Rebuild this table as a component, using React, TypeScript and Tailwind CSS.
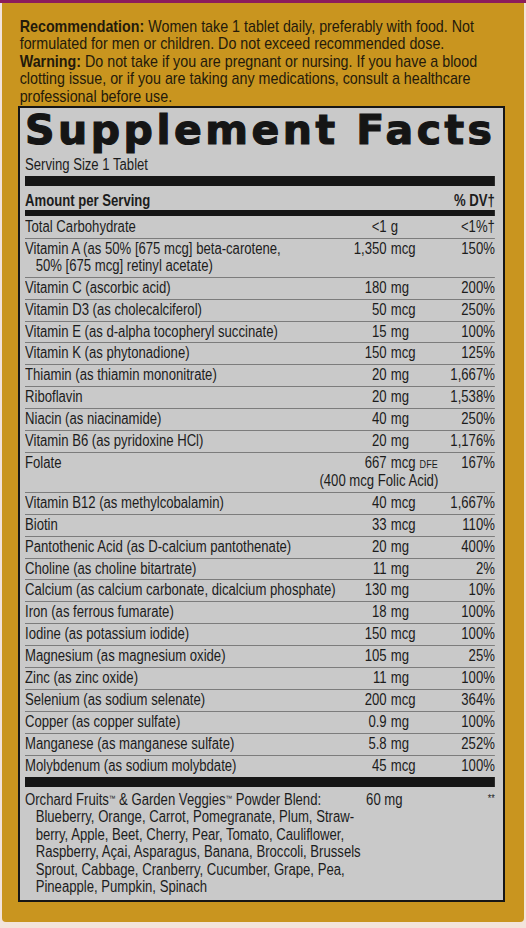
import React from "react";

type Row = {
  name: string[];
  num: string;
  unit: string;
  dv: string;
};

const rows: Row[] = [
  { name: ["Total Carbohydrate"], num: "<1", unit: "g", dv: "<1%†" },
  {
    name: ["Vitamin A (as 50% [675 mcg] beta-carotene,", "50% [675 mcg] retinyl acetate)"],
    num: "1,350",
    unit: "mcg",
    dv: "150%",
  },
  { name: ["Vitamin C (ascorbic acid)"], num: "180", unit: "mg", dv: "200%" },
  { name: ["Vitamin D3 (as cholecalciferol)"], num: "50", unit: "mcg", dv: "250%" },
  { name: ["Vitamin E (as d-alpha tocopheryl succinate)"], num: "15", unit: "mg", dv: "100%" },
  { name: ["Vitamin K (as phytonadione)"], num: "150", unit: "mcg", dv: "125%" },
  { name: ["Thiamin (as thiamin mononitrate)"], num: "20", unit: "mg", dv: "1,667%" },
  { name: ["Riboflavin"], num: "20", unit: "mg", dv: "1,538%" },
  { name: ["Niacin (as niacinamide)"], num: "40", unit: "mg", dv: "250%" },
  { name: ["Vitamin B6 (as pyridoxine HCl)"], num: "20", unit: "mg", dv: "1,176%" },
  { name: ["Folate"], num: "667", unit: "mcg", dv: "167%" },
  { name: ["Vitamin B12 (as methylcobalamin)"], num: "40", unit: "mcg", dv: "1,667%" },
  { name: ["Biotin"], num: "33", unit: "mcg", dv: "110%" },
  { name: ["Pantothenic Acid (as D-calcium pantothenate)"], num: "20", unit: "mg", dv: "400%" },
  { name: ["Choline (as choline bitartrate)"], num: "11", unit: "mg", dv: "2%" },
  { name: ["Calcium (as calcium carbonate, dicalcium phosphate)"], num: "130", unit: "mg", dv: "10%" },
  { name: ["Iron (as ferrous fumarate)"], num: "18", unit: "mg", dv: "100%" },
  { name: ["Iodine (as potassium iodide)"], num: "150", unit: "mcg", dv: "100%" },
  { name: ["Magnesium (as magnesium oxide)"], num: "105", unit: "mg", dv: "25%" },
  { name: ["Zinc (as zinc oxide)"], num: "11", unit: "mg", dv: "100%" },
  { name: ["Selenium (as sodium selenate)"], num: "200", unit: "mcg", dv: "364%" },
  { name: ["Copper (as copper sulfate)"], num: "0.9", unit: "mg", dv: "100%" },
  { name: ["Manganese (as manganese sulfate)"], num: "5.8", unit: "mg", dv: "252%" },
  { name: ["Molybdenum (as sodium molybdate)"], num: "45", unit: "mcg", dv: "100%" },
];

const blend = [
  "Blueberry, Orange, Carrot, Pomegranate, Plum, Straw-",
  "berry, Apple, Beet, Cherry, Pear, Tomato, Cauliflower,",
  "Raspberry, Açai, Asparagus, Banana, Broccoli, Brussels",
  "Sprout, Cabbage, Cranberry, Cucumber, Grape, Pea,",
  "Pineapple, Pumpkin, Spinach",
];

// label type is a condensed grotesque; no narrow face is installed, so the
// text blocks are laid out wide and squeezed horizontally
const FactRow = ({ row, first }: { row: Row; first: boolean }) => {
  const folate = row.name[0] === "Folate";
  return (
    <div
      className={
        first
          ? "flex items-start pt-[3px] pb-[2px] leading-[16.9px]"
          : "flex items-start py-[2px] leading-[16.9px] border-t border-[#7c7c7c]"
      }
    >
      <div className="flex-1 min-w-0">
        {row.name.map((line, i) => (
          <div key={i} className={i > 0 ? "pl-[13px] whitespace-nowrap" : "whitespace-nowrap"}>
            {line}
          </div>
        ))}
      </div>
      <div className="w-[110px] shrink-0">
        <div className="flex whitespace-nowrap">
          <span className="w-[43px] text-right">{row.num}</span>
          <span className="ml-[5px]">
            {row.unit}
            {folate && <span className="ml-[5px] text-[11px]">DFE</span>}
          </span>
        </div>
        {folate && (
          <div className="flex justify-end whitespace-nowrap pr-[4px]">(400 mcg Folic Acid)</div>
        )}
      </div>
      <div className="w-[65px] shrink-0 text-right whitespace-nowrap">{row.dv}</div>
    </div>
  );
};

export default function App() {
  return (
    <div className="min-h-screen bg-[#f3e4dc] font-['Liberation_Sans',Arial,sans-serif]">
      <div className="h-[3px] bg-[#8c1d5c]" />

      <div className="mx-[2px] h-[919px] overflow-hidden rounded-b-[4px] bg-[#c9951f] pt-[15px] pl-[16px] pr-[19px]">
        {/* Label text above the panel */}
        <div className="w-[560px] origin-left scale-x-[0.84] text-[17px] leading-[17.4px] text-[#241a0b] pl-[2px]">
          <div className="whitespace-nowrap">
            <span className="font-bold">Recommendation:</span> Women take 1 tablet daily, preferably with food. Not
          </div>
          <div className="whitespace-nowrap">formulated for men or children. Do not exceed recommended dose.</div>
          <div className="whitespace-nowrap">
            <span className="font-bold">Warning:</span> Do not take if you are pregnant or nursing. If you have a blood
          </div>
          <div className="whitespace-nowrap">
            clotting issue, or if you are taking any medications, consult a healthcare
          </div>
          <div className="whitespace-nowrap">professional before use.</div>
        </div>

        {/* Supplement Facts panel */}
        <div className="mt-[1px] h-[796px] overflow-hidden border-2 border-[#161616] bg-[#c9c9c9] pt-[2px] pl-[5px] pr-[10px] text-[#1c1c1c]">
          <div className="font-['DejaVu_Sans',sans-serif] font-bold text-[41px] leading-[41px] tracking-[3.5px] whitespace-nowrap text-[#151515] [-webkit-text-stroke:1.2px_#151515]">
            Supplement Facts
          </div>

          <div className="w-[573px] origin-left scale-x-[0.82] text-[16px]">
            <div className="mt-[5px] leading-[17px]">Serving Size 1 Tablet</div>
            <div className="mt-[3px] h-[10px] bg-[#161616]" />
            <div className="flex justify-between pt-[6px] pb-[1px] leading-[17px] font-bold">
              <span>Amount per Serving</span>
              <span>% DV†</span>
            </div>
            <div className="h-[6px] bg-[#161616]" />

            {rows.map((r, i) => (
              <FactRow key={r.name[0]} row={r} first={i === 0} />
            ))}

            <div className="h-[10px] bg-[#161616]" />

            <div className="flex items-start pt-[4px] leading-[17.5px]">
              <div className="flex-1 min-w-0">
                <div className="whitespace-nowrap">
                  Orchard Fruits<sup className="text-[8px]">™</sup> &amp; Garden Veggies
                  <sup className="text-[8px]">™</sup> Powder Blend:
                </div>
                {blend.map((line) => (
                  <div key={line} className="pl-[13px] whitespace-nowrap">
                    {line}
                  </div>
                ))}
              </div>
              <div className="w-[110px] shrink-0 pl-[18px] whitespace-nowrap">60 mg</div>
              <div className="w-[65px] shrink-0 text-right text-[11px] leading-[14px]">**</div>
            </div>
          </div>
        </div>
      </div>
    </div>
  );
}
